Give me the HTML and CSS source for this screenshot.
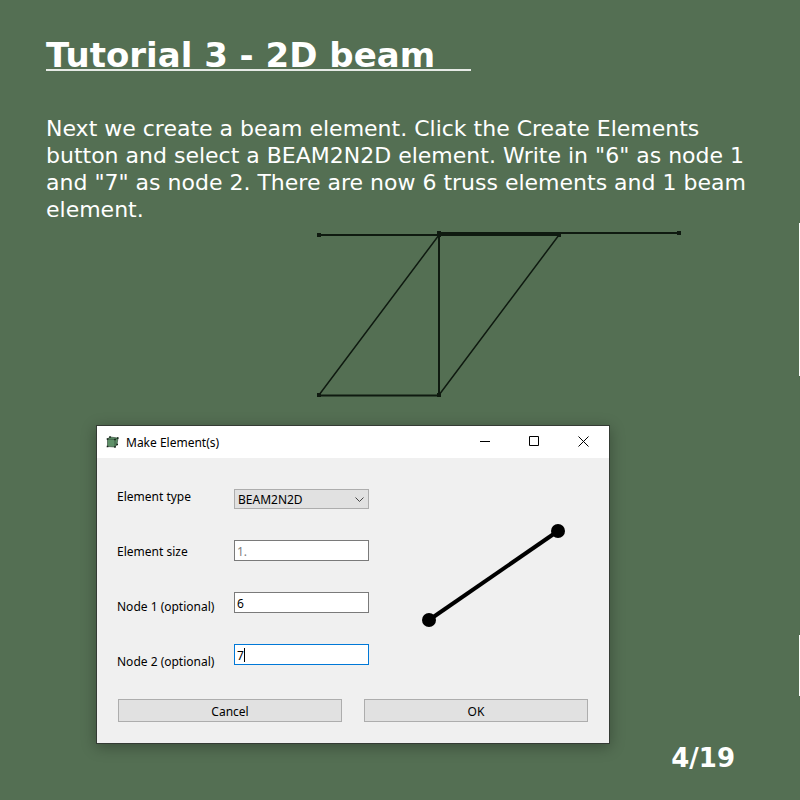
FILE: index.html
```html
<!DOCTYPE html>
<html lang="en">
<head>
<meta charset="utf-8">
<meta name="viewport" content="width=device-width, initial-scale=1">
<title>Tutorial 3 - 2D beam</title>
<link rel="stylesheet" href="styles.css">
</head>
<body>
<main class="slide">
  <h1 class="title">Tutorial 3 - 2D beam</h1>
  <p class="intro">Next we create a beam element. Click the Create Elements button and select a BEAM2N2D element. Write in "6" as node 1 and "7" as node 2. There are now 6 truss elements and 1 beam element.</p>

  <svg class="truss" viewBox="0 0 366 170" width="366" height="170" aria-hidden="true">
    <g class="truss-lines">
      <path d="M3 7H244M3 167.500H123M123 5V167"/>
      <path d="M123 5H363"/>
      <path class="truss-heavy" d="M123 6H244"/>
      <path class="truss-thin" d="M3 167L123 7M123 167L243 7"/>
    </g>
    <path class="truss-nodes" d="M1 5h4v4h-4zM1 165h4v4h-4zM121 3h4v6h-4zM121 165h4v4h-4zM241 5h4v4h-4zM361 3h4v4h-4z"/>
  </svg>

  <section class="dialog" aria-labelledby="dialog-title">
    <header class="titlebar">
      <svg class="app-icon" viewBox="0 0 13 13" width="13" height="13" aria-hidden="true">
        <path class="cube" d="M1.500 3L4 1L12 2L11 8.500L9 11L1.500 10.500Z"/>
        <path class="cube-edge" d="M1.500 3L9 3.500L12 2M9 3.500V11M1.500 3V10.500L9 11L11 8.500M1.500 3L4 1L12 2L11 8.500"/>
        <path class="cube-node" d="M.7 2.200h1.600v1.600H.7zM3.200 .2h1.600v1.600H3.200zM11 1.200h1.600v1.600H11zM8.200 2.700h1.600v1.600H8.200zM.7 9.700h1.600v1.600H.7zM8.200 10.200h1.600v1.600H8.200zM10.400 7.700h1.600v1.600h-1.600z"/>
      </svg>
      <h2 class="dialog-title" id="dialog-title">Make Element(s)</h2>
      <div class="window-controls">
        <button type="button" aria-label="Minimize"><svg viewBox="0 0 11 11" width="11" height="11"><path d="M0 5.500H10"/></svg></button>
        <button type="button" aria-label="Maximize"><svg viewBox="0 0 11 11" width="11" height="11"><path d="M.5 .5H9.500V9.500H.5Z"/></svg></button>
        <button type="button" aria-label="Close"><svg viewBox="0 0 11 11" width="11" height="11"><path d="M.5 .5L10.500 10.500M10.500 .5L.5 10.500"/></svg></button>
      </div>
    </header>
    <form class="form">
      <div class="fields">
        <div class="labels">
          <label for="type">Element type</label>
          <label for="size">Element size</label>
          <label for="node1">Node 1 (optional)</label>
          <label for="node2">Node 2 (optional)</label>
        </div>
        <div class="inputs">
          <div class="select-wrap">
            <select id="type"><option>BEAM2N2D</option></select>
            <svg class="chevron" viewBox="0 0 9 6" width="9" height="6" aria-hidden="true"><path d="M.5 .5L4.500 4.500L8.500 .5"/></svg>
          </div>
          <input id="size" type="text" placeholder="1.">
          <input id="node1" type="text" value="6">
          <div class="active-field">
            <input id="node2" type="text" value="7">
            <span class="caret"></span>
          </div>
        </div>
        <svg class="beam" viewBox="0 0 146 106" width="146" height="106" aria-hidden="true">
          <path d="M8 97L137 8"/>
          <circle cx="8" cy="97" r="7"/>
          <circle cx="137" cy="8" r="7"/>
        </svg>
      </div>
      <div class="actions">
        <button type="button">Cancel</button>
        <button type="button">OK</button>
      </div>
    </form>
  </section>

  <p class="page-number">4/19</p>
</main>
</body>
</html>
```
FILE: styles.css
```css
* {
  box-sizing: border-box;
}

body {
  margin: 0;
  background: #546f53;
  color: #fff;
  font-family: "DejaVu Sans", sans-serif;
}

.slide {
  position: relative;
  min-height: 100vh;
  padding: 42px 46px 28px;
}

.slide::before,
.slide::after {
  content: "";
  position: absolute;
  right: 0;
  width: 1px;
  background: #fff;
}

.slide::before {
  top: 223px;
  height: 153px;
}

.slide::after {
  top: 635px;
  height: 61px;
}

.title {
  width: fit-content;
  margin: 0 0 44px;
  padding-right: 36px;
  border-bottom: 2px solid #e6ebe6;
  font-size: 34px;
  line-height: 27px;
  white-space: nowrap;
}

.intro {
  margin: 0;
  font-size: 22px;
  line-height: 27px;
}

.truss {
  display: block;
  margin: 5px 0 27px 270px;
}

.truss-lines {
  fill: none;
  stroke: #0f1a10;
  stroke-width: 2;
}

.truss-lines .truss-heavy {
  stroke-width: 4;
}

.truss-lines .truss-thin {
  stroke-width: 1.5;
}

.truss-nodes {
  fill: #0f1a10;
}

.dialog {
  width: 514px;
  max-width: 100%;
  margin-left: 50px;
  border: 1px solid #343b34;
  background: #f0f0f0;
  box-shadow: 0 3px 14px rgba(0, 0, 0, 0.3);
  color: #000;
  font-family: "Noto Sans", sans-serif;
  font-size: 12px;
  line-height: 17px;
}

.titlebar {
  display: flex;
  align-items: center;
  height: 32px;
  padding-left: 9px;
  background: #fff;
}

.cube {
  fill: #5e9068;
}

.cube-edge {
  fill: none;
  stroke: #29402f;
  stroke-width: 0.6;
}

.cube-node {
  fill: #152018;
}

.dialog-title {
  margin: 0 0 0 7px;
  font-size: 12px;
  font-weight: 400;
}

.window-controls {
  display: flex;
  align-self: flex-start;
  margin-left: auto;
  padding-right: 1px;
}

.window-controls button {
  display: grid;
  place-items: center;
  width: 49px;
  height: 30px;
  padding: 0;
  border: 0;
  background: none;
}

.window-controls svg,
.chevron {
  fill: none;
  stroke: #000;
}

.form {
  padding: 30px 21px 21px 20px;
}

.fields {
  display: flex;
}

.labels {
  display: flex;
  flex-direction: column;
  gap: 38px;
  width: 117px;
}

.inputs {
  display: flex;
  flex-direction: column;
  gap: 31px;
  width: 135px;
  padding-top: 1px;
}

.inputs input,
.inputs select {
  display: block;
  width: 100%;
  height: 21px;
  margin: 0;
  padding: 2px 2px 0;
  border: 1px solid #7a7a7a;
  border-radius: 0;
  outline: 0;
  background: #fff;
  color: #000;
  font: inherit;
}

.inputs select {
  height: 20px;
  padding: 0 3px;
  border-color: #adadad;
  background: #e1e1e1;
  appearance: none;
}

.inputs input::placeholder {
  color: #808080;
}

.select-wrap,
.active-field {
  position: relative;
}

.chevron {
  position: absolute;
  top: 8px;
  right: 5px;
  stroke: #444;
}

.inputs .active-field input {
  border-color: #0078d7;
}

.caret {
  position: absolute;
  top: 4px;
  left: 10px;
  width: 1px;
  height: 14px;
  background: #000;
}

.beam {
  margin: 35px 21px 0 auto;
  overflow: visible;
}

.beam path {
  stroke: #000;
  stroke-width: 4;
}

.actions {
  display: grid;
  grid-template-columns: 1fr 1fr;
  gap: 22px;
  margin: 29px 0 0 1px;
}

.actions button {
  height: 23px;
  padding: 2px 0 0;
  border: 1px solid #adadad;
  background: #e1e1e1;
  color: #000;
  font: inherit;
}

.page-number {
  margin: 0;
  padding-right: 19px;
  font-size: 26px;
  font-weight: 700;
  line-height: 28px;
  text-align: right;
}
```
